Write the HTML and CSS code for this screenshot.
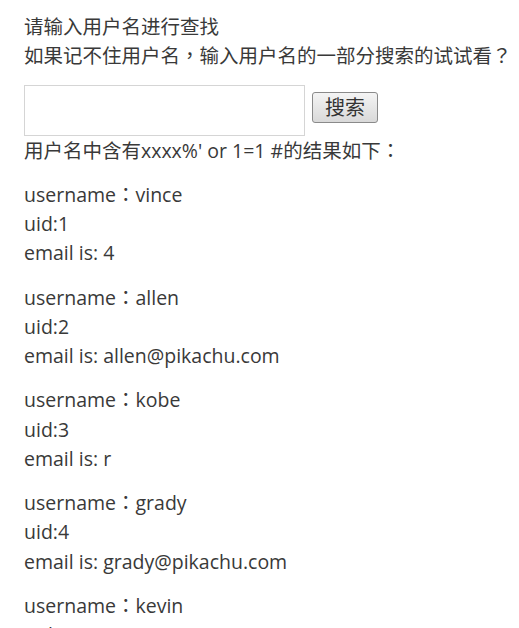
FILE: index.html
```html
<!DOCTYPE html>
<html lang="zh-CN">
<head>
<meta charset="utf-8">
<title>search</title>
<link rel="stylesheet" href="styles.css">
</head>
<body>
<div class="page">
  <p class="intro">请输入用户名进行查找<br>如果记不住用户名<span class="punc" lang="zh-TW">，</span>输入用户名的一部分搜索的试试看<span class="punc" lang="zh-TW">？</span></p>
  <form class="search">
    <input class="search-input" type="text" name="name">
    <button class="search-btn" type="button">搜索</button>
  </form>
  <p class="summary">用户名中含有xxxx%' or 1=1 #的结果如下<span class="punc" lang="zh-TW">：</span></p>
  <p class="entry">username<span class="punc" lang="zh-TW">：</span>vince<br>uid:1<br>email is: 4</p>
  <p class="entry">username<span class="punc" lang="zh-TW">：</span>allen<br>uid:2<br>email is: allen@pikachu.com</p>
  <p class="entry">username<span class="punc" lang="zh-TW">：</span>kobe<br>uid:3<br>email is: r</p>
  <p class="entry">username<span class="punc" lang="zh-TW">：</span>grady<br>uid:4<br>email is: grady@pikachu.com</p>
  <p class="entry">username<span class="punc" lang="zh-TW">：</span>kevin<br>uid:5<br>email is: kevin@pikachu.com</p>
</div>
</body>
</html>
```

FILE: styles.css
```css
html, body {
  margin: 0;
  padding: 0;
  background: #ffffff;
  height: 100%;
  overflow: hidden;
}
body {
  font-family: "Open Sans", "Noto Sans CJK SC", sans-serif;
  font-size: 19.5px;
  line-height: 1.5;
  color: #393939;
}
.page {
  padding: 12px 0 0 24px;
}
.intro {
  margin: 0;
}
.punc {
  font-family: "Noto Sans CJK TC", sans-serif;
  line-height: 0;
}
.search {
  display: flex;
  align-items: flex-start;
  margin: 14px 0 0 0;
}
.search-input {
  box-sizing: border-box;
  width: 281px;
  height: 51px;
  margin: 0;
  border: 1px solid #d5d5d5;
  background: #fff;
  font: inherit;
}
.search-btn {
  box-sizing: border-box;
  width: 66px;
  height: 31px;
  margin: 7px 0 0 7px;
  padding: 0;
  border: 1px solid #8a8a8a;
  border-radius: 3px;
  background: linear-gradient(#f4f4f4, #d9d9d9);
  font-family: "Noto Sans CJK SC", sans-serif;
  font-size: 20px;
  line-height: 1;
  color: #333;
}
.summary {
  margin: 0;
}
.entry {
  margin: 15px 0 0 0;
}
```
